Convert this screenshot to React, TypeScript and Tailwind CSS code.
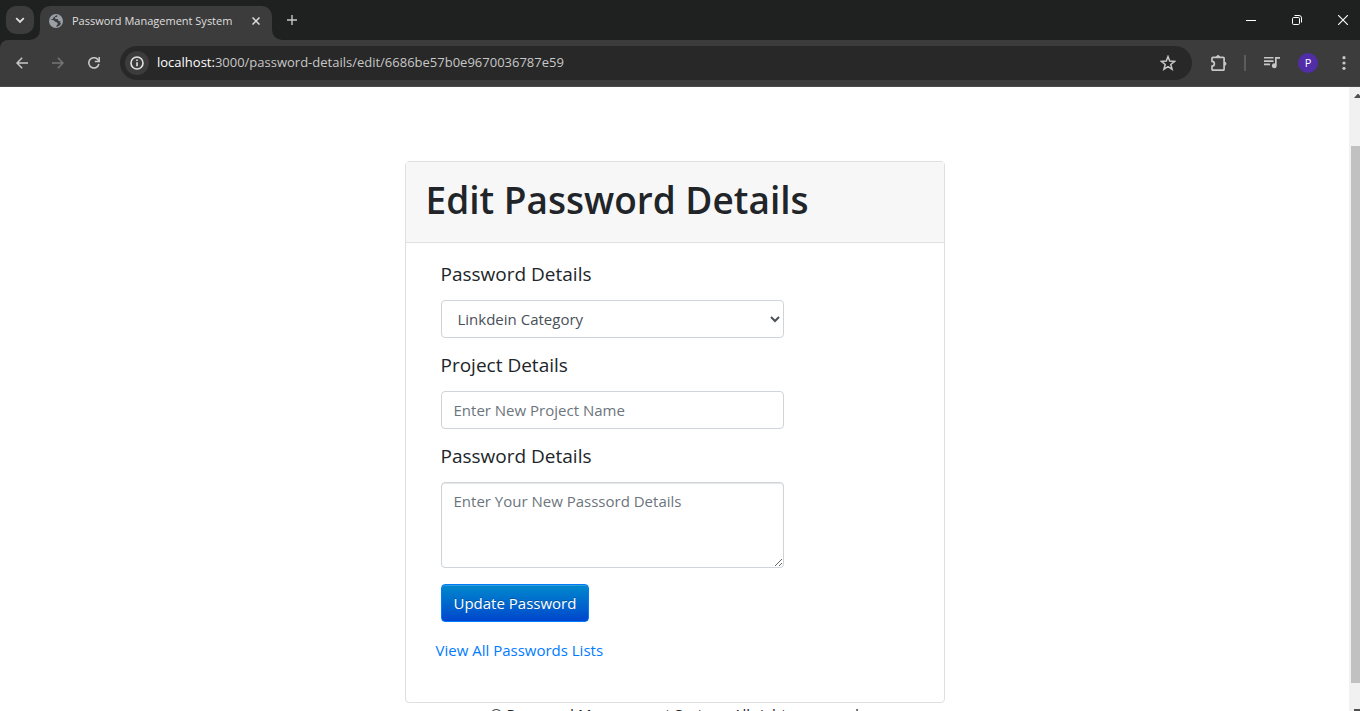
import type { ReactNode } from "react";

function IconButton({ label, className, children }: { label: string; className: string; children: ReactNode }) {
  return (
    <button type="button" aria-label={label} className={`flex shrink-0 items-center justify-center ${className}`}>
      {children}
    </button>
  );
}

function TabStrip() {
  return (
    <div className="flex h-10 shrink-0 items-start bg-[#1f2120] text-[#dfdfdf]">
      <IconButton label="Search tabs" className="ml-1.5 mt-1.5 size-7 rounded-[10px] bg-[#3c3c3c]">
        <svg width="10" height="7" viewBox="0 0 10 7" fill="none" stroke="currentColor" strokeWidth="1.8">
          <path d="M1.2 1.2 5 5l3.800-3.800" />
        </svg>
      </IconButton>
      <div className="relative ml-1.5 mt-1.5 flex h-[34px] w-[232px] items-center rounded-t-[10px] bg-[#3c3c3c] pb-1 pl-2 pr-2">
        <svg className="absolute -left-2.5 bottom-0" width="10" height="10" viewBox="0 0 10 10" fill="#3c3c3c">
          <path d="M10 0v10H0A10 10 0 0 0 10 0Z" />
        </svg>
        <svg className="absolute -right-2.5 bottom-0" width="10" height="10" viewBox="0 0 10 10" fill="#3c3c3c">
          <path d="M0 0v10h10A10 10 0 0 1 0 0Z" />
        </svg>
        <svg className="shrink-0" width="16" height="16" viewBox="0 0 16 16">
          <circle cx="8" cy="8" r="7" fill="#9aa0a6" />
          <path
            fill="#3c3c3c"
            d="M8.600 2.300C7 3 6.900 3.900 5.400 4.400c-.5.300-.2 1.100-.8 1.500-.6.300-1.500.2-2.200.9C3.500 6.700 5 6.800 6 7.500c1 .7.900 1.300 1.900 1.600 1 .3 2.200.7 1.800 2-.3 1.100-1.600 1.200-1.500 2.600 2.200-.1 4.100-1.300 5-3.300-.9.200-1.300-.7-1.100-1.300.2-.5.7-.8 1.400-.8-.9-.2-2.100.1-2.900-.4-.9-.5-.2-1.400-.8-1.700-.7-.3-1.800.100-2.600-.5-.7-.5-.3-1.400.500-1.600.9-.2 1.900-.6 1.800-1.200C9.400 2.500 9 2.500 8.600 2.300Z"
          />
        </svg>
        <span className="ml-2 flex-1 whitespace-nowrap text-[11px]">Password Management System</span>
        <IconButton label="Close tab" className="size-4">
          <svg width="8" height="8" viewBox="0 0 8 8" stroke="currentColor" strokeWidth="1.500">
            <path d="m.5.5 7 7m0-7-7 7" />
          </svg>
        </IconButton>
      </div>
      <IconButton label="New tab" className="ml-1.5 mt-1.5 size-7">
        <svg width="10" height="10" viewBox="0 0 10 10" stroke="#c7c7c7" strokeWidth="1.400">
          <path d="M5 0v10M0 5h10" />
        </svg>
      </IconButton>
      <div className="flex-1" />
      <div className="flex h-10 items-center text-white">
        <IconButton label="Minimize" className="h-10 w-[46px]">
          <svg width="10" height="10" viewBox="0 0 10 10" stroke="currentColor">
            <path d="M0 5.500h10" />
          </svg>
        </IconButton>
        <IconButton label="Restore" className="h-10 w-[46px]">
          <svg width="10" height="10" viewBox="0 0 10 10" fill="none" stroke="currentColor">
            <rect x=".5" y="2.500" width="7" height="7" rx="1.200" />
            <path d="M2.500.500H7A2.500 2.500 0 0 1 9.500 3v4.500" />
          </svg>
        </IconButton>
        <IconButton label="Close window" className="h-10 w-10 pl-1.5">
          <svg width="10" height="10" viewBox="0 0 10 10" stroke="currentColor" strokeWidth="1.100">
            <path d="m0 0 10 10M10 0 0 10" />
          </svg>
        </IconButton>
      </div>
    </div>
  );
}

function Toolbar() {
  return (
    <div className="bg-[#1f2120]">
      <div className="flex h-[47px] items-center rounded-tl-lg border-b border-[#4b4b4b] bg-[#3c3c3c] text-[#c7c7c7]">
        <div className="flex gap-2 pl-2">
          <IconButton label="Back" className="size-7">
            <svg width="12" height="12" viewBox="0 0 12 12" fill="none" stroke="currentColor" strokeWidth="1.500">
              <path d="M12 6H1M6.200.800 1 6l5.200 5.200" />
            </svg>
          </IconButton>
          <IconButton label="Forward" className="size-7 text-[#757575]">
            <svg width="12" height="12" viewBox="0 0 12 12" fill="none" stroke="currentColor" strokeWidth="1.500">
              <path d="M0 6h11M5.800.800 11 6l-5.200 5.200" />
            </svg>
          </IconButton>
          <IconButton label="Reload" className="size-7">
            <svg width="12" height="12" viewBox="0 0 12 12" fill="none" stroke="currentColor" strokeWidth="1.600">
              <path d="M10.900 7A5.100 5.100 0 1 1 9.700 2.400L11 4" />
              <path d="M11.200 0v4.500H6.800" />
            </svg>
          </IconButton>
        </div>
        <div className="ml-3 flex h-[34px] flex-1 items-center rounded-full bg-[#282828] pl-[5px] pr-2.5">
          <IconButton label="View site information" className="size-6 rounded-full bg-[#3c3c3c] text-[#e3e3e3]">
            <svg width="14" height="14" viewBox="0 0 14 14" fill="none" stroke="currentColor" strokeWidth="1.600">
              <circle cx="7" cy="7" r="6" />
              <path d="M7 6.200v4M7 3.600v1.500" />
            </svg>
          </IconButton>
          <div className="ml-2 flex-1 whitespace-nowrap text-[13px] text-[#c7c7c7]">
            <span className="text-white">localhost:</span>3000/password-details/edit/6686be57b0e9670036787e59
          </div>
          <IconButton label="Bookmark this tab" className="size-7">
            <svg width="16" height="16" viewBox="0 0 16 16" fill="none" stroke="currentColor" strokeWidth="1.500">
              <path d="m8 1.600 1.700 4.500 4.900.300-3.800 3.100 1.300 4.700L8 11.600l-4.100 2.600 1.300-4.700L1.400 6.400l4.900-.3Z" />
            </svg>
          </IconButton>
        </div>
        <div className="flex items-center pl-3">
          <IconButton label="Extensions" className="size-7">
            <svg width="17" height="17" viewBox="0 0 17 17" fill="none" stroke="currentColor" strokeWidth="1.700">
              <path d="M2.900 2.400H13.200a.9.9 0 0 1 .9.900v10.900a.9.9 0 0 1-.9.900H2.900a.9.9 0 0 1-.9-.9v-3.100a2.300 2.300 0 0 0 0-4.700V3.300a.9.9 0 0 1 .9-.9Z" />
              <path d="M6.300 2a1.800 1.800 0 0 1 3.500 0ZM14.600 7a1.800 1.800 0 0 1 0 3.500Z" fill="currentColor" strokeWidth="1" />
            </svg>
          </IconButton>
          <span className="ml-3 h-4 w-0.5 bg-[#5c5c5c]" />
          <IconButton label="Media controls" className="ml-3 size-7">
            <svg width="16" height="14" viewBox="0 0 16 14" fill="currentColor">
              <path d="M0 1h9.500v1.600H0ZM0 4.300h9.500v1.600H0ZM0 7.600h6v1.600H0ZM11 1h5v1.700h-3.300v7A2.400 2.400 0 1 1 11 7.500Z" />
            </svg>
          </IconButton>
          <IconButton label="Profile" className="ml-3 size-5 rounded-full bg-[#512da8] text-[11px] text-white">
            P
          </IconButton>
          <IconButton label="Menu" className="ml-3 mr-0.5 size-7">
            <svg width="4" height="14" viewBox="0 0 4 14" fill="currentColor">
              <circle cx="2" cy="1.700" r="1.600" />
              <circle cx="2" cy="7" r="1.600" />
              <circle cx="2" cy="12.300" r="1.600" />
            </svg>
          </IconButton>
        </div>
      </div>
    </div>
  );
}

const control =
  "block w-full rounded border border-[#ced4da] bg-white px-3 text-[15px] leading-6 text-[#495057] placeholder:text-[#6c757d]";

function Field({ id, label, children }: { id: string; label: string; children: ReactNode }) {
  return (
    <div className="mb-3">
      <label htmlFor={id} className="mb-2.5 block text-[19px] leading-[31px]">
        {label}
      </label>
      {children}
    </div>
  );
}

function EditCard() {
  return (
    <section className="mx-auto w-[540px] rounded border border-[#dfdfdf]">
      <header className="border-b border-[#dfdfdf] bg-[#f7f7f7] px-5 pb-[18px] pt-3.5">
        <h1 className="text-[37px] font-semibold leading-[48px]">Edit Password Details</h1>
      </header>
      <form className="px-[35px] pt-4">
        <div className="w-[343px]">
          <Field id="category" label="Password Details">
            <select id="category" className={`${control} h-[38px]`}>
              <option>Linkdein Category</option>
            </select>
          </Field>
          <Field id="project" label="Project Details">
            <input id="project" type="text" placeholder="Enter New Project Name" className={`${control} h-[38px]`} />
          </Field>
          <Field id="details" label="Password Details">
            <textarea
              id="details"
              placeholder="Enter Your New Passsord Details"
              className={`${control} h-[86px] resize py-1.5 shadow-[inset_0_1px_1px_rgba(0,0,0,0.1)]`}
            />
          </Field>
        </div>
        <button
          type="button"
          className="mt-1 h-[38px] rounded border border-[#007bff] bg-linear-to-b from-[#0088cc] to-[#0044cc] px-3 text-[15px] leading-6 text-white shadow-[inset_0_1px_0_rgba(255,255,255,0.2)] text-shadow-[0_-1px_0_rgba(0,0,0,0.25)]"
        >
          Update Password
        </button>
      </form>
      <a href="#passwords" className="mx-[30px] mb-10 mt-4 block w-fit text-[15px] leading-6 text-[#007bff]">
        View All Passwords Lists
      </a>
    </section>
  );
}

export default function App() {
  return (
    <div className="flex h-screen flex-col overflow-hidden font-['Segoe_UI','Open_Sans',sans-serif]">
      <TabStrip />
      <Toolbar />
      <div className="flex min-h-0 flex-1 bg-white text-[#212529]">
        <main className="flex-1 overflow-hidden pt-[74px]">
          <EditCard />
          <footer className="text-center text-[15px] leading-[22px]">
            © Password Management System. All rights reserved
          </footer>
        </main>
        <div className="flex w-[11px] flex-col overflow-hidden bg-[#f1f1f1] pl-0.5" aria-hidden="true">
          <svg className="mt-1.5 shrink-0" width="13" height="5" viewBox="0 0 13 5" fill="#505050">
            <path d="M3 5 6.500 1h1l3.500 4Z" />
          </svg>
          <div className="mb-7 mt-12 flex-1 bg-[#c1c1c1]" />
          <div className="-mt-1 ml-[3px] h-1 w-1.5 shrink-0 self-start border-b-2 border-[#505050]" />
        </div>
      </div>
    </div>
  );
}
